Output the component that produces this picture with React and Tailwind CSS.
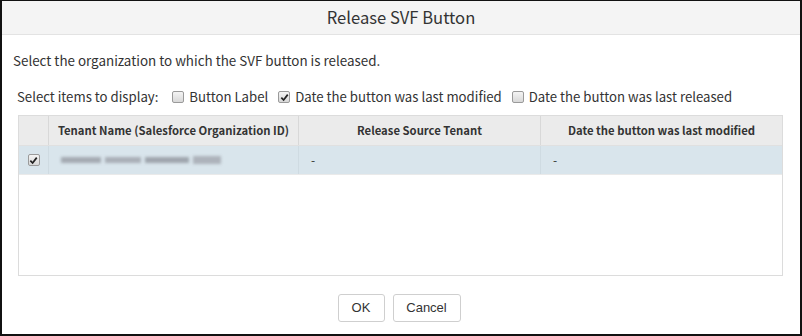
import React from 'react';

function Box({ checked }) {
  return (
    <span className="inline-flex h-[12px] w-[12px] shrink-0 items-center justify-center rounded-[2px] border border-[#9a9a9a] bg-gradient-to-b from-[#f4f4f4] to-[#d8d8d8]">
      {checked && (
        <svg width="9" height="9" viewBox="0 0 10 10">
          <path d="M1.5 5.2 L4 7.8 L8.6 1.8" fill="none" stroke="#222" strokeWidth="1.9" />
        </svg>
      )}
    </span>
  );
}

export default function App() {
  const font = { fontFamily: '"Noto Sans CJK JP", "Noto Sans", sans-serif' };
  return (
    <div className="w-[802px] h-[336px] bg-white border-l-2 border-t border-r-2 border-b-2 border-[#111] flex flex-col overflow-hidden text-[#333]" style={font}>
      {/* Header */}
      <div className="h-[34px] shrink-0 bg-[#f4f4f4] border-b border-[#e3e3e3] flex items-center justify-center text-[16.6px] text-[#333]">
        Release SVF Button
      </div>

      <div className="flex-1 flex flex-col">
        <p className="mt-[16px] ml-[11px] text-[13.4px] leading-[18px]">
          Select the organization to which the SVF button is released.
        </p>

        <div className="mt-[19px] ml-[15px] flex items-center text-[13.2px] leading-[18px]">
          <span className="mr-[14px]">Select items to display:</span>
          <Box />
          <span className="ml-[5px] mr-[10px]">Button Label</span>
          <Box checked />
          <span className="ml-[5px] mr-[10px]">Date the button was last modified</span>
          <Box />
          <span className="ml-[5px]">Date the button was last released</span>
        </div>

        {/* Table */}
        <div className="mt-[9px] ml-[16px] w-[765px] h-[161px] border border-[#dcdcdc] flex flex-col">
          <div className="h-[30px] bg-[#ebebeb] flex text-[11.3px] font-bold text-[#333] border-b border-[#e0e0e0]">
            <div className="w-[30px] border-r border-[#d8d8d8]" />
            <div className="w-[250px] border-r border-[#d8d8d8] flex items-center justify-center">Tenant Name (Salesforce Organization ID)</div>
            <div className="w-[242px] border-r border-[#d8d8d8] flex items-center justify-center">Release Source Tenant</div>
            <div className="flex-1 flex items-center justify-center">Date the button was last modified</div>
          </div>
          <div className="h-[29px] bg-[#d9e5ec] flex text-[12px] border-b border-[#eaeaea]">
            <div className="w-[30px] border-r border-[#cfdbe2] flex items-center justify-center"><Box checked /></div>
            <div className="w-[250px] border-r border-[#cfdbe2] flex items-center pl-[12px]">
              <div className="flex items-center gap-[4px] blur-[1.6px]">
                <span className="h-[6px] w-[40px] bg-[#a4aab2]" />
                <span className="h-[6px] w-[36px] bg-[#a9afb7]" />
                <span className="h-[6px] w-[44px] bg-[#9fa5ad]" />
                <span className="h-[8px] w-[28px] bg-[#adb3bb]" />
              </div>
            </div>
            <div className="w-[242px] border-r border-[#cfdbe2] flex items-center pl-[12px]">-</div>
            <div className="flex-1 flex items-center pl-[12px]">-</div>
          </div>
          <div className="flex-1 bg-white" />
        </div>

        {/* Buttons */}
        <div className="mt-[18px] flex justify-center gap-[8px] pr-[4px]" style={{ fontFamily: '"Liberation Sans", Arial, sans-serif' }}>
          <button className="h-[28px] w-[47px] rounded-[3px] border border-[#cfcfcf] bg-white text-[13px] text-[#333]">OK</button>
          <button className="h-[28px] w-[68px] rounded-[3px] border border-[#cfcfcf] bg-white text-[13px] text-[#333]">Cancel</button>
        </div>
      </div>
    </div>
  );
}
